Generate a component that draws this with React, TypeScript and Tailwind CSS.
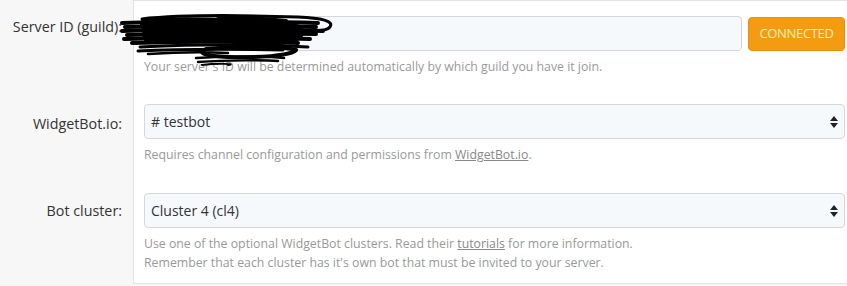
import React from 'react'

function Arrows() {
  return (
    <svg width="8" height="12" viewBox="0 0 8 12" className="shrink-0">
      <path d="M4 0 L8 5 L0 5 Z" fill="#222" />
      <path d="M4 12 L8 7 L0 7 Z" fill="#222" />
    </svg>
  )
}

function Scribble() {
  // black marker scribble that hides the server id
  return (
    <svg
      className="absolute left-[118px] top-[12px] pointer-events-none"
      width="220"
      height="56"
      viewBox="0 0 220 56"
    >
      <g fill="none" stroke="#000" strokeLinecap="round" strokeLinejoin="round">
        <path d="M24 7 C60 3 120 3 180 5 C204 6 216 9 212 15 C208 20 192 19 172 18" strokeWidth="3" />
        <path d="M4 11 C50 9 120 9 200 11" strokeWidth="4" />
        <path d="M7 15 C60 13 130 13 198 15" strokeWidth="4" />
        <path d="M4 19 C60 17 140 17 205 19" strokeWidth="4" />
        <path d="M9 23 C70 21 140 21 198 22" strokeWidth="4" />
        <path d="M6 27 C60 25 130 25 192 27" strokeWidth="4" />
        <path d="M14 31 C70 29 130 29 180 31" strokeWidth="4" />
        <path d="M22 35 C80 32 140 32 190 35" strokeWidth="3" />
        <path d="M28 12 C80 10 150 12 178 18 C188 24 160 30 120 29" strokeWidth="12" />
        <path d="M30 22 C90 20 140 20 172 24" strokeWidth="12" />
        <path d="M30 28 C70 27 120 27 160 29" strokeWidth="8" />
        <path d="M20 39 C60 37 120 37 165 38" strokeWidth="3" />
        <path d="M88 37 C120 34 162 34 178 38 C172 44 140 46 110 45 C88 44 78 41 88 37" strokeWidth="4" />
        <path d="M30 42 C60 40 90 40 110 41" strokeWidth="2.5" />
        <path d="M78 46 C110 44 150 44 166 46" strokeWidth="2.5" />
        <path d="M80 50 C110 48 150 48 160 49" strokeWidth="2.5" />
        <path d="M84 53 C100 51 120 52 110 53" strokeWidth="2" />
        <path d="M100 7 C130 5 150 7 168 9" strokeWidth="4" />
      </g>
    </svg>
  )
}

export default function App() {
  return (
    <div className="relative w-[847px] h-[286px] bg-[#f7f7f7] font-['Open_Sans',sans-serif] text-[#333]">
      <div className="flex flex-col">
        {/* server id */}
        <div className="flex">
          <div className="w-[133px] shrink-0 pr-[11px] pt-[17px] text-right text-[14.3px] leading-[20px]">
            Server ID (guild):
          </div>
          <div className="flex-1 bg-white border-l border-t border-[#e3e3e3] pl-[10px] pr-[2px] pt-[15px] pb-[28px]">
            <div className="flex gap-[6px]">
              <div className="flex-1 h-[35px] rounded-[4px] border border-[#d4d8db] bg-[#f6f9fc]" />
              <button className="w-[97px] h-[34px] mt-[1px] rounded-[4px] bg-[#f39c12] border border-[#e6900c] text-[#fdeeb8] text-[13px] tracking-tight">
                CONNECTED
              </button>
            </div>
            <p className="mt-[6px] text-[12.3px] leading-[19px] text-[#999]">
              Your server's ID will be determined automatically by which guild you have it join.
            </p>
          </div>
        </div>

        {/* widgetbot channel */}
        <div className="flex">
          <div className="w-[133px] shrink-0 pr-[11px] pt-[10px] text-right text-[14.3px] leading-[20px]">
            WidgetBot.io:
          </div>
          <div className="flex-1 bg-white border-l border-[#e3e3e3] pl-[10px] pr-[2px] pb-[29px]">
            <div className="flex items-center justify-between h-[35px] rounded-[4px] border border-[#d4d8db] bg-[#f6f9fc] pl-[6px] pr-[6px] text-[14px]">
              <span># testbot</span>
              <Arrows />
            </div>
            <p className="mt-[6px] text-[12.3px] leading-[19px] text-[#999]">
              Requires channel configuration and permissions from{' '}
              <a className="underline text-[#888]">WidgetBot.io</a>.
            </p>
          </div>
        </div>

        {/* cluster */}
        <div className="flex">
          <div className="w-[133px] shrink-0 pr-[11px] pt-[8px] text-right text-[14.3px] leading-[20px]">
            Bot cluster:
          </div>
          <div className="flex-1 bg-white border-l border-b border-[#e3e3e3] pl-[10px] pr-[2px] pb-[11px]">
            <div className="flex items-center justify-between h-[35px] rounded-[4px] border border-[#d4d8db] bg-[#f6f9fc] pl-[6px] pr-[6px] text-[14px]">
              <span>Cluster 4 (cl4)</span>
              <Arrows />
            </div>
            <p className="mt-[6px] text-[12.3px] leading-[19px] text-[#999]">
              Use one of the optional WidgetBot clusters. Read their{' '}
              <a className="underline text-[#888]">tutorials</a> for more information.
              <br />
              Remember that each cluster has it's own bot that must be invited to your server.
            </p>
          </div>
        </div>
      </div>
      <Scribble />
    </div>
  )
}
